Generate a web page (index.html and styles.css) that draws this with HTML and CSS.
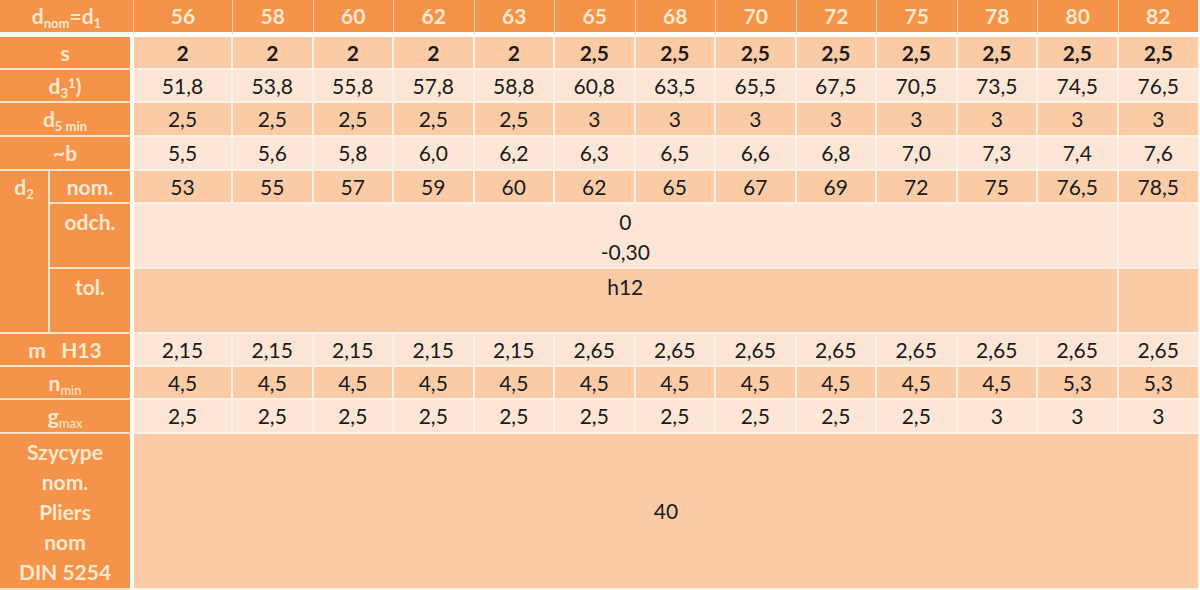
FILE: index.html
```html
<!DOCTYPE html>
<html lang="pl">
<head>
<meta charset="utf-8">
<title>DIN 5254</title>
<link rel="stylesheet" href="styles.css">
</head>
<body>
<table class="spec">
  <colgroup>
    <col class="c-la"><col class="c-lb"><col class="c-first">
    <col class="c-d"><col class="c-d"><col class="c-d"><col class="c-d"><col class="c-d"><col class="c-d">
    <col class="c-d"><col class="c-d"><col class="c-d"><col class="c-d"><col class="c-d"><col class="c-last">
  </colgroup>
  <thead>
    <tr class="r-head">
      <th colspan="2" class="hl">d<sub>nom</sub>=d<sub>1</sub></th>
      <th>56</th><th>58</th><th>60</th><th>62</th><th>63</th><th>65</th><th>68</th><th>70</th><th>72</th><th>75</th><th>78</th><th>80</th><th>82</th>
    </tr>
  </thead>
  <tbody>
    <tr class="r dark bold h33">
      <th colspan="2" class="lab">s</th>
      <td>2</td><td>2</td><td>2</td><td>2</td><td>2</td><td>2,5</td><td>2,5</td><td>2,5</td><td>2,5</td><td>2,5</td><td>2,5</td><td>2,5</td><td>2,5</td>
    </tr>
    <tr class="r light h33">
      <th colspan="2" class="lab">d<sub>3</sub><sup>1</sup>)</th>
      <td>51,8</td><td>53,8</td><td>55,8</td><td>57,8</td><td>58,8</td><td>60,8</td><td>63,5</td><td>65,5</td><td>67,5</td><td>70,5</td><td>73,5</td><td>74,5</td><td>76,5</td>
    </tr>
    <tr class="r dark h34">
      <th colspan="2" class="lab">d<sub>5 min</sub></th>
      <td>2,5</td><td>2,5</td><td>2,5</td><td>2,5</td><td>2,5</td><td>3</td><td>3</td><td>3</td><td>3</td><td>3</td><td>3</td><td>3</td><td>3</td>
    </tr>
    <tr class="r light h34">
      <th colspan="2" class="lab">~b</th>
      <td>5,5</td><td>5,6</td><td>5,8</td><td>6,0</td><td>6,2</td><td>6,3</td><td>6,5</td><td>6,6</td><td>6,8</td><td>7,0</td><td>7,3</td><td>7,4</td><td>7,6</td>
    </tr>
    <tr class="r dark h33">
      <th rowspan="3" class="lab sub-a top">d<sub>2</sub></th>
      <th class="lab">nom.</th>
      <td>53</td><td>55</td><td>57</td><td>59</td><td>60</td><td>62</td><td>65</td><td>67</td><td>69</td><td>72</td><td>75</td><td>76,5</td><td>78,5</td>
    </tr>
    <tr class="r light h64">
      <th class="lab top">odch.</th>
      <td colspan="12" class="top">0<br>-0,30</td><td></td>
    </tr>
    <tr class="r dark h65">
      <th class="lab top">tol.</th>
      <td colspan="12" class="top">h12</td><td></td>
    </tr>
    <tr class="r light h33">
      <th colspan="2" class="lab">m&nbsp;&nbsp;&nbsp;H13</th>
      <td>2,15</td><td>2,15</td><td>2,15</td><td>2,15</td><td>2,15</td><td>2,65</td><td>2,65</td><td>2,65</td><td>2,65</td><td>2,65</td><td>2,65</td><td>2,65</td><td>2,65</td>
    </tr>
    <tr class="r dark h33">
      <th colspan="2" class="lab">n<sub class="thin">min</sub></th>
      <td>4,5</td><td>4,5</td><td>4,5</td><td>4,5</td><td>4,5</td><td>4,5</td><td>4,5</td><td>4,5</td><td>4,5</td><td>4,5</td><td>4,5</td><td>5,3</td><td>5,3</td>
    </tr>
    <tr class="r light h34">
      <th colspan="2" class="lab">g<sub class="thin">max</sub></th>
      <td>2,5</td><td>2,5</td><td>2,5</td><td>2,5</td><td>2,5</td><td>2,5</td><td>2,5</td><td>2,5</td><td>2,5</td><td>2,5</td><td>3</td><td>3</td><td>3</td>
    </tr>
    <tr class="r dark h154 last">
      <th colspan="2" class="lab top">Szycype<br>nom.<br>Pliers<br>nom<br>DIN 5254</th>
      <td colspan="13">40</td>
    </tr>
  </tbody>
</table>
</body>
</html>
```
FILE: styles.css
```css
html, body {
  margin: 0;
  padding: 0;
  background: #ffffff;
}

.spec {
  width: 1199px;
  table-layout: fixed;
  border-collapse: separate;
  border-spacing: 0;
  font-family: Lato, "Liberation Sans", sans-serif;
  font-size: 21px;
  color: #1a1a1a;
}

.c-la { width: 50px; }
.c-lb { width: 84px; }
.c-first { width: 99px; }
.c-d { width: 80.5px; }
.c-last { width: 80.5px; }

.spec th,
.spec td {
  padding: 0;
  text-align: center;
  vertical-align: middle;
  line-height: 30px;
  border-right: 2px solid #fdf1e7;
  border-bottom: 2px solid #fdf1e7;
}

.spec tr > :last-child { border-right: 1px solid #fdf1e7; }

.r-head { height: 37px; }
.r-head th {
  background: #f5934a;
  color: #fbe8cf;
  font-weight: 700;
  font-size: 21px;
  border-right: 1px solid #f9d2ad;
  border-bottom: 5px solid #ffffff;
}

.hl { text-align: center; }

.lab {
  background: #f5934a;
  color: #fbe8cf;
  font-weight: 700;
  font-size: 21px;
}
.spec .lab { border-bottom: 2px solid #fbe2c8; }
.spec tr > .lab:not(.sub-a) { border-right: 4px solid #ffffff; }
.spec .sub-a { border-right: 2px solid #fbe2c8; }

.dark td { background: #fbcba6; }
.light td { background: #fde6d5; }

.bold td { font-weight: 700; }

.top { vertical-align: top !important; padding-top: 3px !important; }
.spec .sub-a.top { padding-top: 1px !important; }

sub, sup {
  font-size: 62%;
  line-height: 0;
}
sub { vertical-align: -0.3em; }
sup { vertical-align: 0.45em; }
.thin { font-weight: 400; }

.h33 { height: 33px; }
.h34 { height: 34px; }
.h64 { height: 64px; }
.h65 { height: 65px; }
.h154 { height: 156px; }
```
